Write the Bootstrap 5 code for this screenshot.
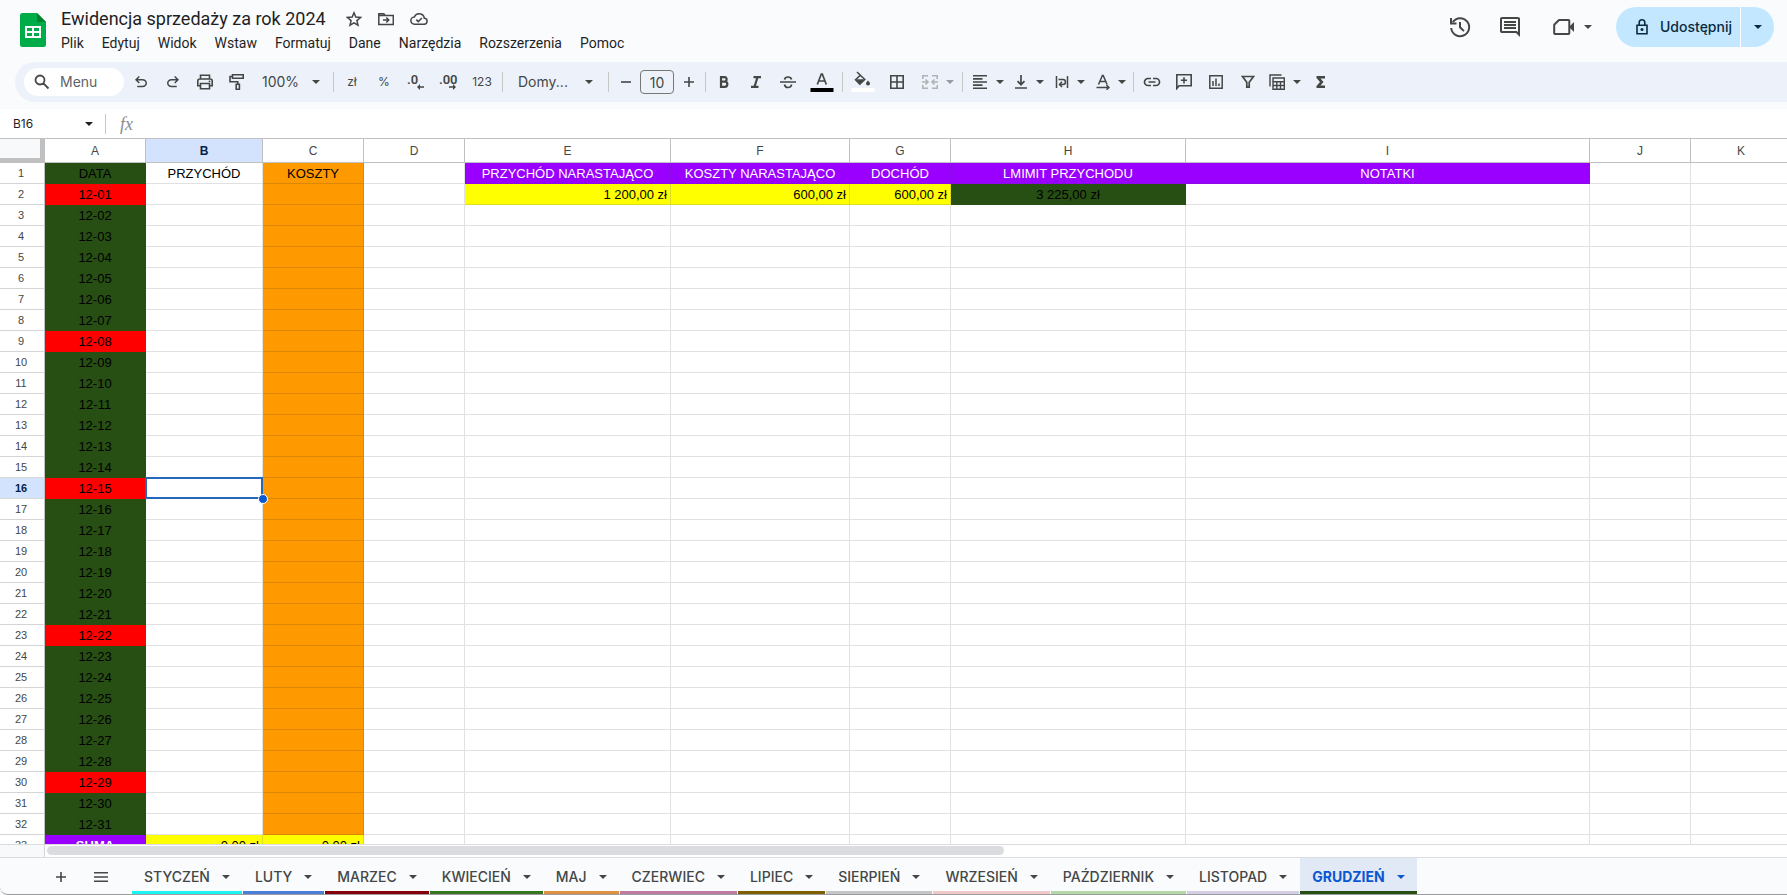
<!DOCTYPE html>
<html lang="pl">
<head>
<meta charset="utf-8">
<meta name="viewport" content="width=device-width, initial-scale=1">
<title>Ewidencja sprzedaży za rok 2024</title>
<link href="https://cdn.jsdelivr.net/npm/bootstrap@5.3.0/dist/css/bootstrap.min.css" rel="stylesheet">
<style>
:root{--ink:#444746;--line:#e1e1e1;--bar:#edf2fa}
body{font-family:Inter,Roboto,"Liberation Sans",sans-serif;background:#f9fbfd;color:#1f1f1f;font-size:14px;line-height:20px}
.app{height:100vh;border-bottom:1px solid #9a9c9f;border-left:0;border-bottom-left-radius:8px}
button{color:inherit;font:inherit;background:none;border:0;padding:0}
svg{display:block;fill:currentColor;flex:none}
.plain{display:flex;align-items:center;justify-content:center;color:var(--ink)}
.top-area{height:62px;padding:7px 13px 0 20px}
.logo{margin-top:6px}
.titles{margin-left:15px}
.doc-title{font-family:Roboto,sans-serif;font-size:18px;line-height:24px;color:#1f1f1f}
.menus a{font-family:Roboto,sans-serif;color:#1f1f1f;text-decoration:none;font-size:14px;line-height:20px}
.menus{gap:18px;padding-top:2px}
.top-actions{gap:26px}
.share{height:40px;margin-left:-2px;border-radius:20px;background:#c2e7ff;color:#0b2a3f;overflow:hidden}
.share button{height:40px}
.share-main{padding:0 8px 0 20px;gap:12px;font-weight:500;border-right:1px solid #fff!important}
.share-more{width:33px}
.bar{height:40px;margin-left:15px;padding-left:9px;background:var(--bar);border-radius:20px 0 0 20px;color:var(--ink)}
.pill{width:100px;height:28px;border-radius:14px;background:#fff;padding-left:10px;margin-right:1px;gap:10px}
.pill input{width:60px;border:0;outline:0;background:none;padding:0;color:var(--ink);font-size:14px}
.pill input::placeholder{color:#5f6368;opacity:1}
.tool{width:32px;height:32px}
.wide{width:36px}
.slim{width:29px}
.tiny{font-size:12px}
.caret{width:0;height:0;border:4px solid transparent;border-top-color:currentColor;border-bottom:0;flex:none}
.split{margin:0 2px 0 3px;width:36px;height:32px;gap:8px}
.merge{margin-left:7px}
.vr-line{width:1px;height:20px;background:#c7c7c7;margin:0 2px;flex:none}
.name-line{margin-left:12px}
.zoom-pick{width:78px;padding:0 11px 0 9px}
.font-pick{width:101px;padding:0 13px}
.size-box{width:34px;height:24px;border:1px solid #747775;border-radius:4px;background:none;text-align:center;padding:0;color:var(--ink);font-size:14px}
.formula{height:29px;margin-top:7px;background:#fff}
.name-box{width:68px;border:0;background:none;padding:0;margin-left:13px;font-size:12px;color:#1f1f1f;outline:0}
.fx{font-family:"Liberation Serif",serif;font-style:italic;font-size:18px;color:#8a8d90}
.grid-wrap{background:#fff;border-top:1px solid #c0c0c0;min-height:0}
.sheet{table-layout:fixed;border-collapse:separate;border-spacing:0;width:1792px;font-family:"Liberation Sans",Arial,sans-serif;font-size:13px;line-height:16px;color:#000}
.sheet th,.sheet td{height:21px;padding:3px 3px 1px;border-right:1px solid var(--line);border-bottom:1px solid var(--line);text-align:center;font-weight:400;white-space:nowrap;overflow:hidden}
.sheet thead th{height:24px;border-color:#c0c0c0;font-size:12px;color:var(--ink);background:#fff;padding:2px 3px}
.sheet tbody th{font-size:11px;color:var(--ink);padding:2px 5px 2px 3px;border-color:#c0c0c0;border-bottom-color:#d5d5d5}
.sheet .corner{background:#f8f9fa;border-right:5px solid #c0c0c0;border-bottom:5px solid #c0c0c0}
.sheet .on{background:#d3e3fd!important;color:#041e49!important;font-weight:700!important}
.sheet .money{text-align:right}
.sheet .green{background:#274e13;border-color:#274e13}
.sheet .red{background:#f00;border-color:#f00}
.sheet .orange{background:#ff9900;border-color:#dd8706}
.sheet .yellow{background:#ff0;border-color:#dede20}
.sheet .purple{background:#9900ff;border-color:#8d0be8;color:#fff}
.sheet .picked{position:relative;overflow:visible}
.picked::before{content:"";position:absolute;inset:-1px;border:2px solid #2567bd}
.picked::after{content:"";position:absolute;right:-6px;bottom:-6px;width:10px;height:10px;border-radius:50%;background:#0b57d0;border:1px solid #fff}
.scroller{height:14px;background:#fff;border-top:1px solid #dadce0;border-bottom:1px solid #dadce0}
.scroll-stub{width:45px;background:#f8f9fa;border-right:1px solid #d5d5d5}
.thumb{width:957px;height:9px;border-radius:5px;background:#dadce0;margin:1px 0 0 2px}
.tabs{height:36px;padding-left:41px}
.tab-tool{width:40px;padding-top:2px}
.sheet-tabs{margin-left:11px}
.sheet-tab{height:36px;padding:2px 12px 0;gap:12px;font-size:14px;font-weight:500;margin-right:1px;color:var(--ink);box-shadow:inset 0 -3px 0 var(--tab)}
.sheet-tab.current{background:#e1e9f7;color:#0b57d0;font-weight:700}
</style>
</head>
<body class="overflow-hidden">
<svg width="0" height="0" class="position-absolute">
<defs>
<g id="i-undo"><path d="M7 19v-2h7.1q1.6 0 2.75-1T18 13.500t-1.150-2.500-2.750-1H7.800l2.600 2.600L9 14 4 9l5-5 1.400 1.400L7.800 8h6.300q2.400 0 4.150 1.600T20 13.500t-1.750 3.900T14.100 19z"/></g>
</defs>
</svg>
<div class="app d-flex flex-column overflow-hidden">
<header class="top-area d-flex align-items-start flex-shrink-0">
  <svg class="logo" width="26" height="34" viewBox="0 0 26 34"><path fill="#00ac47" d="M2.500 0H17l9 9v22.500a2.500 2.500 0 0 1-2.500 2.500h-21A2.500 2.500 0 0 1 0 31.500v-29A2.500 2.500 0 0 1 2.500 0z"/><path fill="#00832d" d="M17 0l9 9h-9z"/><path fill="#fff" fill-rule="evenodd" d="M5 13h16v12H5zM7 15v3h5v-3zM14 15v3h5v-3zM7 20v3h5v-3zM14 20v3h5v-3z"/></svg>
  <div class="titles flex-grow-1">
    <div class="d-flex align-items-center">
      <h1 class="doc-title m-0 fw-normal">Ewidencja sprzedaży za rok 2024</h1>
      <div class="d-flex ms-3 gap-3">
      <button class="plain ms-1" aria-label="Gwiazdka"><svg width="16" height="16" viewBox="0 0 16 16"><path fill="none" stroke="currentColor" stroke-width="1.500" d="M8 1.800l1.800 4.300 4.700.4-3.600 3.100 1.100 4.600L8 11.800l-4 2.400 1.100-4.600L1.500 6.500l4.700-.4z"/></svg></button>
      <button class="plain" aria-label="Przenieś"><svg width="16" height="16" viewBox="0 0 16 16"><path fill="none" stroke="currentColor" stroke-width="1.500" d="M.8 2.800h5l1.500 1.700h8v9H.8zM.8 4.500h7M5 9h5.500M8.300 6.500L10.800 9l-2.500 2.500"/></svg></button>
      <button class="plain" aria-label="Zapisano"><svg width="18" height="16" viewBox="0 0 18 16"><path fill="none" stroke="currentColor" stroke-width="1.500" d="M4.600 13.200h9.200a3 3 0 0 0 .5-6 5.200 5.200 0 0 0-10-1.200 3.600 3.600 0 0 0 .3 7.200zM6.300 8.600l2 2 3.600-3.600"/></svg></button>
      </div>
    </div>
    <nav class="menus d-flex"><a href="#">Plik</a><a href="#">Edytuj</a><a href="#">Widok</a><a href="#">Wstaw</a><a href="#">Formatuj</a><a href="#">Dane</a><a href="#">Narzędzia</a><a href="#">Rozszerzenia</a><a href="#">Pomoc</a></nav>
  </div>
  <div class="top-actions d-flex align-items-center">
    <button class="plain" aria-label="Historia"><svg width="24" height="24" viewBox="0 0 24 24"><path fill="none" stroke="currentColor" stroke-width="2" d="M3.200 13a9 9 0 1 0 1.600-6M3 3v5.500h5.500M12 7v5.300l4 3.800"/></svg></button>
    <button class="plain" aria-label="Komentarze"><svg width="24" height="24" viewBox="0 0 24 24"><path d="M22 22l-4-4H4q-.8 0-1.400-.6T2 16V4q0-.8.600-1.400T4 2h16q.8 0 1.400.6T22 4zM4 4v12h14.800l1.200 1.200V4zM6 6h12v2H6zM6 9h12v2H6zM6 12h12v2H6z" fill-rule="evenodd"/></svg></button>
    <button class="plain gap-2 ms-1" aria-label="Spotkanie"><svg width="24" height="24" viewBox="0 0 24 24"><path fill="none" stroke="currentColor" stroke-width="2" stroke-linejoin="round" d="M7 5h9.500q.8 0 .8.800v12.400q0 .8-.8.800H3q-.8 0-.8-.8V9.800z"/><path d="M18 11l4-4v10l-4-4z"/></svg><span class="caret"></span></button>
    <div class="share d-flex">
      <button class="share-main d-flex align-items-center"><svg width="12" height="16" viewBox="0 0 12 16"><path fill="none" stroke="currentColor" stroke-width="1.600" d="M1 6.300h10v8.400H1zM3.200 6V3.600a2.800 2.800 0 0 1 5.600 0V6"/><circle cx="6" cy="10.500" r="1.500"/></svg>Udostępnij</button>
      <button class="share-more d-flex align-items-center justify-content-center" aria-label="Więcej"><span class="caret"></span></button>
    </div>
  </div>
</header>

<div class="bar d-flex align-items-center flex-shrink-0" role="toolbar">
  <label class="pill d-flex align-items-center"><svg width="16" height="16" viewBox="0 0 16 16"><path fill="none" stroke="currentColor" stroke-width="1.800" d="M6 1.500a4.500 4.500 0 1 0 0 9 4.500 4.500 0 0 0 0-9zM9.200 9.200l5.300 5.300"/></svg><input placeholder="Menu" aria-label="Menu"></label>
  <button class="plain tool" aria-label="Cofnij"><svg width="18" height="18" viewBox="0 0 24 24"><use href="#i-undo"/></svg></button>
  <button class="plain tool" aria-label="Ponów"><svg width="18" height="18" viewBox="0 0 24 24"><g transform="matrix(-1 0 0 1 24 0)"><use href="#i-undo"/></g></svg></button>
  <button class="plain tool" aria-label="Drukuj"><svg width="18" height="18" viewBox="0 0 18 18"><path fill="none" stroke="currentColor" stroke-width="1.600" d="M4.500 5.500V2.300h9v3.200M4.500 12.800H1.800V8q0-2 2-2h10.400q2 0 2 2v4.800h-2.700M4.500 10.500h9v5.200h-9z"/><circle cx="13.500" cy="8.300" r=".9"/></svg></button>
  <button class="plain tool" aria-label="Kopiuj formatowanie"><svg width="18" height="18" viewBox="0 0 18 18"><path fill="none" stroke="currentColor" stroke-width="1.600" d="M4.500 1.800h10.700v3.400H4.500zM4.500 3.500H2v5.200h7.800v2.500M8.200 11.300h3.200v5H8.200z"/></svg></button>
  <button class="zoom-pick d-flex align-items-center justify-content-between">100% <span class="caret"></span></button>
  <span class="vr-line"></span>
  <button class="plain tool tiny">zł</button>
  <button class="plain tool tiny">%</button>
  <button class="plain tool" aria-label="Mniej miejsc"><svg width="20" height="20" viewBox="0 0 20 20"><text x="1" y="12" font-size="13" font-weight="600" font-family="Roboto">.0</text><path d="M11 15l3-3v2.200h4v1.600h-4V18z"/></svg></button>
  <button class="plain tool" aria-label="Więcej miejsc"><svg width="20" height="20" viewBox="0 0 20 20"><text x="1" y="12" font-size="13" font-weight="600" font-family="Roboto">.00</text><path d="M18 15l-3-3v2.200h-4v1.600h4V18z"/></svg></button>
  <button class="plain tool wide tiny">123</button>
  <span class="vr-line"></span>
  <button class="font-pick d-flex align-items-center justify-content-between">Domy... <span class="caret"></span></button>
  <span class="vr-line"></span>
  <button class="plain tool slim" aria-label="Zmniejsz"><svg width="12" height="12"><path d="M1 5.200h10v1.600H1z"/></svg></button>
  <input class="size-box" value="10" aria-label="Rozmiar czcionki">
  <button class="plain tool slim" aria-label="Zwiększ"><svg width="12" height="12"><path d="M1 5.200h4.200V1h1.600v4.200H11v1.600H6.800V11H5.200V6.800H1z"/></svg></button>
  <span class="vr-line"></span>
  <button class="plain tool" aria-label="Pogrubienie"><svg width="12" height="12" viewBox="0 0 12 12"><path fill="none" stroke="currentColor" stroke-width="2.200" d="M3 1.100h3.300a2.300 2.300 0 0 1 0 4.600H3M3 5.700h3.800a2.500 2.500 0 0 1 0 5.100H3V0"/></svg></button>
  <button class="plain tool" aria-label="Kursywa"><svg width="12" height="12" viewBox="0 0 12 12"><path fill="none" stroke="currentColor" stroke-width="2.200" d="M3.500 1.100H11M1 10.900h7.500M7.600 1L4.400 11"/></svg></button>
  <button class="plain tool" aria-label="Przekreślenie"><svg width="16" height="14" viewBox="0 0 16 14"><path fill="none" stroke="currentColor" stroke-width="1.700" d="M0 7h16M11.500 4.500Q11 2 8 2 5 2 4.600 4.600M4.500 9.500Q5 12.500 8 12.500q3.300 0 3.500-3"/></svg></button>
  <button class="plain tool wide" aria-label="Kolor tekstu"><svg width="24" height="20" viewBox="0 0 24 20"><path fill="none" stroke="currentColor" stroke-width="1.700" d="M7.300 12.500L11.300 2h1l4 10.500M8.800 9h6"/><path fill="#000" d="M.5 16h23v4H.5z"/></svg></button>
  <span class="vr-line"></span>
  <button class="plain tool wide" aria-label="Kolor wypełnienia"><svg width="24" height="22" viewBox="0 0 24 22"><path fill="none" stroke="currentColor" stroke-width="1.500" d="M6 1l7.800 7.500-5 4.700-4.300-4.500 5-4.600"/><path d="M5 8.200h8.500l-4.600 5z"/><path d="M17 9.500q2 2 2 3a2 2 0 0 1-4 0q0-1 2-3z"/><path fill="#fff" d="M.5 17h23v4H.5z"/></svg></button>
  <button class="plain tool" aria-label="Obramowanie"><svg width="14" height="14" viewBox="0 0 14 14"><path fill="none" stroke="currentColor" stroke-width="1.600" d="M.8.8h12.400v12.400H.8zM7 1v12M1 7h12"/></svg></button>
  <button class="plain split merge opacity-50" disabled aria-label="Scal komórki"><svg width="16" height="14" viewBox="0 0 16 14"><path fill="none" stroke="#747775" stroke-width="1.600" d="M6 .8H.8V4M10 .8h5.200V4M6 13.200H.8V10M10 13.200h5.200V10M0 7h6M3.500 4.500L6 7 3.500 9.500M16 7h-6M12.500 4.500L10 7l2.500 2.500"/></svg><span class="caret"></span></button>
  <span class="vr-line mx-1"></span>
  <button class="plain split" aria-label="Wyrównanie"><svg width="16" height="16" viewBox="0 0 16 16"><path d="M1 1h14v1.600H1zM1 4.100h9.500v1.600H1zM1 7.200h14v1.600H1zM1 10.300h9.500v1.600H1zM1 13.400h14V15H1z"/></svg><span class="caret"></span></button>
  <button class="plain split" aria-label="Wyrównanie w pionie"><svg width="14" height="16" viewBox="0 0 14 16"><path fill="none" stroke="currentColor" stroke-width="1.700" d="M1 14h12M7 1v9.500M3.500 7.200L7 10.700l3.500-3.500"/></svg><span class="caret"></span></button>
  <button class="plain split" aria-label="Zawijanie"><svg width="14" height="14" viewBox="0 0 14 14"><path fill="none" stroke="currentColor" stroke-width="1.500" d="M1.500 1v12M12.500 1v12M3.500 4.500H8a2.400 2.400 0 0 1 0 4.900H5M7 6.800L4.500 9.400 7 12"/></svg><span class="caret"></span></button>
  <button class="plain split" aria-label="Obracanie"><svg width="14" height="16" viewBox="0 0 14 16"><path fill="none" stroke="currentColor" stroke-width="1.500" d="M2.500 10.500L6.400 1.500h.8l3.900 9M4 7.600h5.500M.5 13.500H13M10.500 11l2.500 2.500-2.500 2.300"/></svg><span class="caret"></span></button>
  <span class="vr-line"></span>
  <button class="plain tool" aria-label="Wstaw link"><svg width="18" height="10" viewBox="0 0 18 10"><path fill="none" stroke="currentColor" stroke-width="1.700" d="M8 1.500H5a3.500 3.500 0 0 0 0 7h3M10 1.500h3a3.500 3.500 0 0 1 0 7h-3M5.500 5h7"/></svg></button>
  <button class="plain tool" aria-label="Wstaw komentarz"><svg width="16" height="16" viewBox="0 0 16 16"><path fill="none" stroke="currentColor" stroke-width="1.600" d="M.8 14.500V.8h14.400v11H3zM8 3.200v6.200M4.900 6.300h6.200"/></svg></button>
  <button class="plain tool" aria-label="Wstaw wykres"><svg width="14" height="14" viewBox="0 0 14 14"><path fill="none" stroke="currentColor" stroke-width="1.500" d="M.8.8h12.400v12.400H.8zM4 6v5M7 3.500V11M10 8.500V11"/></svg></button>
  <button class="plain tool" aria-label="Filtr"><svg width="14" height="14" viewBox="0 0 14 14"><path fill="none" stroke="currentColor" stroke-width="1.700" d="M1.500 1.500h11L8.200 7.200v5H5.800v-5z"/></svg></button>
  <button class="plain split" aria-label="Tabela"><svg width="16" height="16" viewBox="0 0 16 16"><path fill="none" stroke="currentColor" stroke-width="1.400" d="M1 12.500V1h11.500M4 4h11.300v11.300H4zM4 7.800h11.300M4 11.500h11.300M7.800 8v7M11.500 8v7"/></svg><span class="caret"></span></button>
  <button class="plain tool" aria-label="Funkcje"><svg width="10" height="12" viewBox="0 0 10 12"><path d="M.5 0h8.500v2.500H4.500L7.500 6l-3 3.500H9V12H.5v-2L4 6 .5 2z"/></svg></button>
</div>

<div class="formula d-flex align-items-center flex-shrink-0">
  <input class="name-box" value="B16" aria-label="Pole nazwy"><span class="caret ms-1"></span>
  <span class="vr-line name-line"></span>
  <label class="fx ms-2 px-1" for="fxInput">fx</label><input id="fxInput" class="flex-grow-1 border-0 bg-transparent">
</div>

<main class="grid-wrap flex-grow-1 overflow-hidden">
<table class="sheet">
<colgroup><col style="width:45px"><col style="width:101px"><col style="width:117px"><col style="width:101px"><col style="width:101px"><col style="width:206px"><col style="width:179px"><col style="width:101px"><col style="width:235px"><col style="width:404px"><col style="width:101px"><col style="width:101px"></colgroup>
<thead><tr><th class="corner"></th><th>A</th><th class="on">B</th><th>C</th><th>D</th><th>E</th><th>F</th><th>G</th><th>H</th><th>I</th><th>J</th><th>K</th></tr></thead>
<tbody id="rows"></tbody>
</table>
</main>

<div class="scroller d-flex flex-shrink-0"><div class="scroll-stub"></div><div class="thumb"></div></div>
<footer class="tabs d-flex flex-shrink-0">
  <button class="plain tab-tool" aria-label="Dodaj arkusz"><svg width="12" height="12"><path d="M1 5.200h4.200V1h1.600v4.200H11v1.600H6.800V11H5.200V6.800H1z"/></svg></button>
  <button class="plain tab-tool" aria-label="Wszystkie arkusze"><svg width="14" height="10"><path d="M0 0h14v1.600H0zM0 4.200h14v1.600H0zM0 8.400h14V10H0z"/></svg></button>
  <div class="sheet-tabs d-flex" id="tabs"></div>
</footer>
</div>

<script>
// Cells of the visible range; each value is [class, text].
const sundays = [1, 8, 15, 22, 29];
const filled = {
  1: {A:['green','DATA'], B:['','PRZYCHÓD'], C:['orange','KOSZTY'], E:['purple','PRZYCHÓD NARASTAJĄCO'], F:['purple','KOSZTY NARASTAJĄCO'], G:['purple','DOCHÓD'], H:['purple','LMIMIT PRZYCHODU'], I:['purple','NOTATKI']},
  2: {E:['yellow money','1 200,00 zł'], F:['yellow money','600,00 zł'], G:['yellow money','600,00 zł'], H:['green','3 225,00 zł']},
  33: {A:['purple fw-bold','SUMA'], B:['yellow money','0,00 zł'], C:['yellow money','0,00 zł']}
};
let html = '';
for (let r = 1; r <= 33; r++) {
  const row = Object.assign({}, filled[r]);
  if (r > 1 && r < 33) {
    const day = r - 1;
    row.A = [sundays.includes(day) ? 'red' : 'green', '12-' + String(day).padStart(2, '0')];
    row.C = ['orange', ''];
  }
  if (r === 16) row.B = ['picked', ''];
  html += `<tr><th scope="row"${r === 16 ? ' class="on"' : ''}>${r}</th>`;
  for (const c of 'ABCDEFGHIJK') {
    const [cls, text] = row[c] || ['', ''];
    html += `<td class="${cls}">${text}</td>`;
  }
  html += '</tr>';
}
document.getElementById('rows').innerHTML = html;

const months = [['STYCZEŃ','#1ef2f2'],['LUTY','#4a80d9'],['MARZEC','#85000b'],['KWIECIEŃ','#38761d'],['MAJ','#e09142'],['CZERWIEC','#c27ba0'],['LIPIEC','#7f6000'],['SIERPIEŃ','#c4c6c8'],['WRZESIEŃ','#f0c8c8'],['PAŹDZIERNIK','#b6d7a8'],['LISTOPAD','#d5cfe6'],['GRUDZIEŃ','#274e13']];
document.getElementById('tabs').innerHTML = months.map(([name, color], i) =>
  `<button class="sheet-tab d-flex align-items-center${i === 11 ? ' current' : ''}" style="--tab:${color}">${name}<span class="caret"></span></button>`).join('');
</script>
<script src="https://cdn.jsdelivr.net/npm/bootstrap@5.3.0/dist/js/bootstrap.bundle.min.js"></script>
</body>
</html>
